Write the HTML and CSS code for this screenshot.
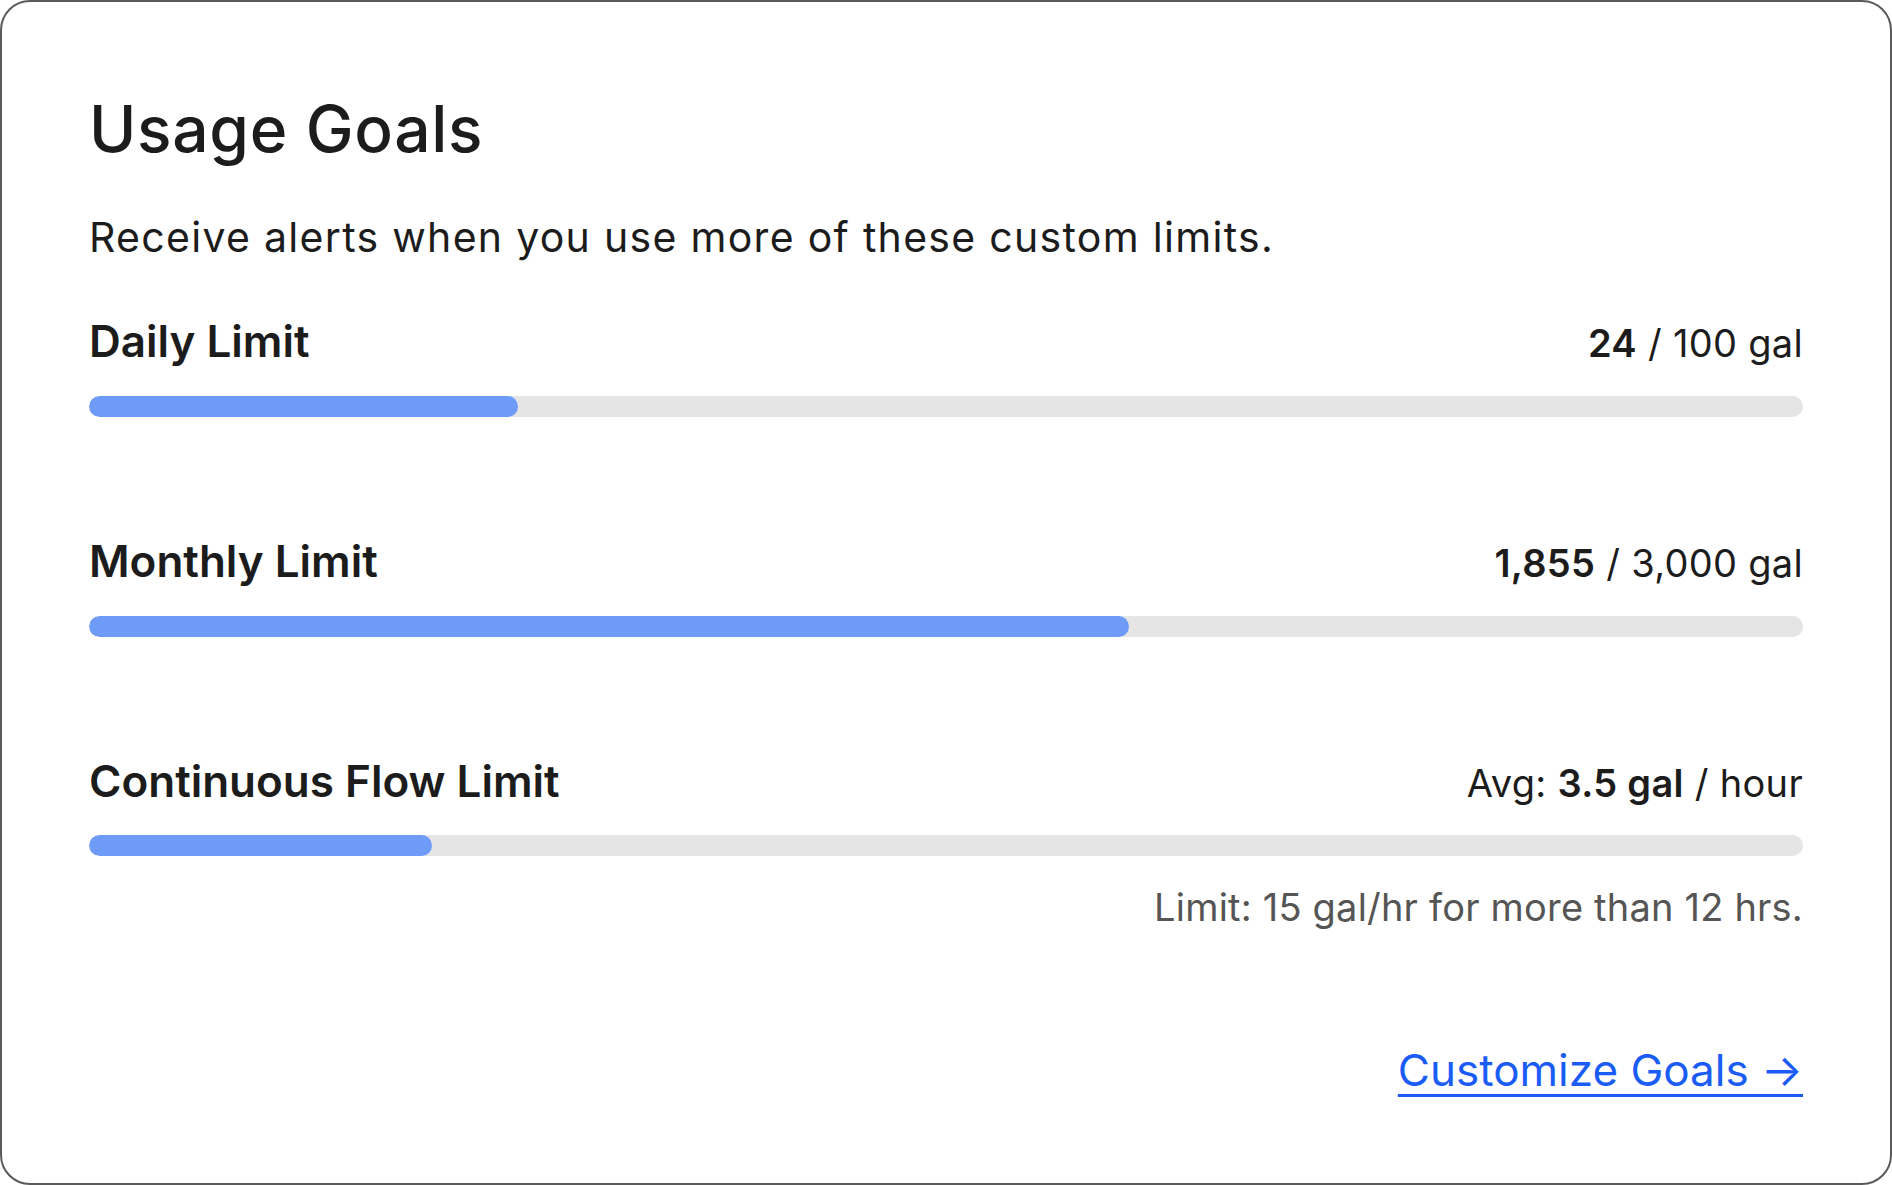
FILE: index.html
```html
<!DOCTYPE html>
<html lang="en">
<head>
  <meta charset="UTF-8" />
  <title>Usage Goals</title>
  <link rel="stylesheet" href="styles.css">
</head>
<body>
  <div class="card">
    <h1 class="title">Usage Goals</h1>
    <p class="subtitle">Receive alerts when you use more of these custom limits.</p>

    <!-- Daily -->
    <div class="goal">
      <div class="goal-head">
        <span class="goal-name">Daily Limit</span>
        <span class="goal-value"><b>24</b> / 100 gal</span>
      </div>
      <div class="track"><div class="fill" style="width:25%"></div></div>
    </div>

    <!-- Monthly -->
    <div class="goal">
      <div class="goal-head">
        <span class="goal-name">Monthly Limit</span>
        <span class="goal-value"><b>1,855</b> / 3,000 gal</span>
      </div>
      <div class="track"><div class="fill" style="width:60.7%"></div></div>
    </div>

    <!-- Continuous flow -->
    <div class="goal">
      <div class="goal-head">
        <span class="goal-name">Continuous Flow Limit</span>
        <span class="goal-value">Avg: <b>3.5 gal</b> / hour</span>
      </div>
      <div class="track"><div class="fill" style="width:20%"></div></div>
      <div class="goal-note">Limit: 15 gal/hr for more than 12 hrs.</div>
    </div>

    <div class="card-footer">
      <a href="#" class="link">Customize Goals →</a>
    </div>
  </div>
</body>
</html>
```

FILE: styles.css
```css
html, body {
  margin: 0;
  height: 100%;
}

body {
  font-family: Inter, "Noto Sans", sans-serif;
  color: #1c1c1c;
  background: #fff;
}

.card {
  box-sizing: border-box;
  height: 100vh;
  border: 2px solid #5a5a5a;
  border-radius: 30px;
  padding: 89px 87px 86px 87px;
  display: flex;
  flex-direction: column;
}

.title {
  margin: 0;
  font-size: 64px;
  font-weight: 500;
  line-height: 1.2;
  letter-spacing: 0.7px;
}

.subtitle {
  margin: 45px 0 0 0;
  font-size: 41px;
  line-height: 1.2;
  letter-spacing: 1.3px;
}

.goal {
  margin-top: 118px;
}

.goal:first-of-type {
  margin-top: 53px;
}

.goal-head {
  display: flex;
  justify-content: space-between;
  align-items: baseline;
  line-height: 1.2;
}

.goal-name {
  font-size: 44px;
  font-weight: 600;
}

.goal-value {
  font-size: 38px;
  letter-spacing: 0.3px;
}

.goal-value b {
  font-weight: 600;
}

.track {
  margin-top: 28px;
  height: 21px;
  border-radius: 11px;
  background: #e5e5e5;
  overflow: hidden;
}

.fill {
  height: 100%;
  border-radius: 11px;
  background: #6f9bf8;
}

.goal-note {
  margin-top: 29px;
  text-align: right;
  font-size: 38px;
  line-height: 1.2;
  letter-spacing: 0.2px;
  color: #555;
}

.card-footer {
  margin-top: auto;
  display: flex;
  justify-content: flex-end;
}

.link {
  font-size: 44px;
  line-height: 1.2;
  color: #1a5cf5;
  text-decoration: underline;
  text-underline-offset: 8px;
  text-decoration-thickness: 3px;
}
```
